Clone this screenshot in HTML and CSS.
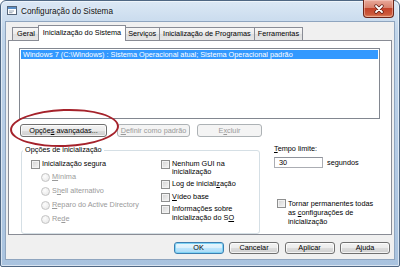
FILE: index.html
```html
<!DOCTYPE html>
<html lang="pt-BR">
<head>
  <meta charset="UTF-8" />
  <title>Configuração do Sistema</title>
  <link rel="stylesheet" href="styles.css">
</head>
<body>
  <div class="window">
    <div class="titlebar">
      <svg class="app-icon" width="10" height="10" viewBox="0 0 10 10">
        <rect x="0.5" y="0.5" width="9" height="8" fill="#fff" stroke="#56667a"/>
        <rect x="1" y="1" width="8" height="2" fill="#5b8fc7"/>
        <rect x="2" y="4.5" width="5" height="1" fill="#9aa7b5"/>
        <rect x="2" y="6.2" width="3.5" height="1" fill="#9aa7b5"/>
      </svg>
      <span class="title">Configuração do Sistema</span>
      <div class="close">
        <svg width="12" height="10" viewBox="0 0 12 10">
          <path d="M3 2 L9 8 M9 2 L3 8" stroke="#5a1b12" stroke-width="3.2" stroke-linecap="round"/>
          <path d="M3 2 L9 8 M9 2 L3 8" stroke="#fff" stroke-width="1.8" stroke-linecap="round"/>
        </svg>
      </div>
    </div>

    <div class="client">
      <div class="tabs">
        <div class="tab">Geral</div>
        <div class="tab active">Inicialização do Sistema</div>
        <div class="tab">Serviços</div>
        <div class="tab">Inicialização de Programas</div>
        <div class="tab">Ferramentas</div>
      </div>

      <div class="panel">
        <div class="listbox">
          <div class="item selected">Windows 7 (C:\Windows) : Sistema Operacional atual; Sistema Operacional padrão</div>
        </div>

        <div class="btn-row">
          <button class="btn btn-adv">Opçõe<u>s</u> avançadas...</button>
          <button class="btn btn-def" disabled><u>D</u>efinir como padrão</button>
          <button class="btn btn-del" disabled>E<u>x</u>cluir</button>
        </div>

        <div class="lower">
          <fieldset class="group">
            <legend>Opções de inicialização</legend>
            <div class="group-cols">
              <div class="col-left">
                <label class="check"><span class="box"></span>Inicialização se<u>g</u>ura</label>
                <label class="radio"><span class="dot"></span><u>M</u>ínima</label>
                <label class="radio"><span class="dot"></span>S<u>h</u>ell alternativo</label>
                <label class="radio"><span class="dot"></span><u>R</u>eparo do Active Directory</label>
                <label class="radio"><span class="dot"></span>Re<u>d</u>e</label>
              </div>
              <div class="col-right">
                <label class="check"><span class="box"></span><span>Nenhum GUI na<br>inicialização</span></label>
                <label class="check"><span class="box"></span><span>Log de iniciali<u>z</u>ação</span></label>
                <label class="check"><span class="box"></span><span><u>V</u>ídeo base</span></label>
                <label class="check"><span class="box"></span><span>Informações sobre<br>inicialização do S<u>O</u></span></label>
              </div>
            </div>
          </fieldset>

          <div class="side">
            <div class="timeout-label"><u>T</u>empo limite:</div>
            <div class="timeout-row">
              <span class="input">30</span>
              <span class="unit">segundos</span>
            </div>
            <label class="check perm"><span class="box"></span><span class="perm-text">Tornar permanentes todas<br>as <u>c</u>onfigurações de<br>inicialização</span></label>
          </div>
        </div>
      </div>

      <div class="footer">
        <button class="btn btn-foot default">OK</button>
        <button class="btn btn-foot">Cancelar</button>
        <button class="btn btn-foot">Aplicar</button>
        <button class="btn btn-foot">Ajuda</button>
      </div>
    </div>

    <div class="ellipse"></div>
  </div>
</body>
</html>
```

FILE: styles.css
```css
:root {
  --frame-border: #4f6783;
  --tab-border: #898c95;
  --client-bg: #f0f0f0;
  --select-bg: #3399ff;
  --btn-border: #707070;
  --disabled-text: #9a9a9a;
  --group-border: #d5dfe5;
}
* { box-sizing: border-box; }
body {
  margin: 0;
  font-family: "Liberation Sans", Arial, sans-serif;
  font-size: 7.3px;
  color: #000;
  background: #fff;
}
u { text-decoration-thickness: 1px; text-underline-offset: 1px; }

.window {
  position: relative;
  width: 400px;
  height: 267px;
  display: flex;
  flex-direction: column;
  padding: 0 5px 7px 5px;
  background: linear-gradient(#dce8f5, #c0d5ea 12%, #b3cae4 60%, #a9c3df);
  border: 1px solid var(--frame-border);
  border-radius: 6px 6px 2px 2px;
  box-shadow: inset 0 0 0 1px rgba(255,255,255,0.55);
}

/* title bar */
.titlebar {
  height: 21px;
  display: flex;
  align-items: center;
}
.app-icon { margin-left: 1px; margin-top: -1px; flex: none; }
.title {
  margin-left: 4px;
  font-size: 8.2px;
  color: #111;
  text-shadow: 0 0 4px rgba(255,255,255,0.9);
}
.close {
  margin-left: auto;
  margin-right: 0;
  align-self: flex-start;
  margin-top: -1px;
  width: 31px;
  height: 18px;
  display: flex;
  align-items: center;
  justify-content: center;
  border: 1px solid #6b2418;
  border-top: none;
  border-radius: 0 0 4px 4px;
  background: linear-gradient(#e9a99a, #d9826d 45%, #c4432a 50%, #cc5a3c 85%, #e08a64);
  box-shadow: inset 0 0 0 1px rgba(255,220,210,0.45);
}

/* client area */
.client {
  flex: 1;
  display: flex;
  flex-direction: column;
  background: var(--client-bg);
  box-shadow: 0 0 0 1px #8fa5bf;
}
.tabs {
  height: 18px;
  display: flex;
  align-items: flex-end;
  padding-left: 6px;
}
.tab {
  height: 13px;
  line-height: 12px;
  padding: 0 3px;
  border: 1px solid var(--tab-border);
  border-bottom: none;
  border-left: none;
  background: linear-gradient(#f7f7f7, #ebebeb 50%, #dedede 50%, #e6e6e6);
  white-space: nowrap;
}
.tab:first-child { border-left: 1px solid var(--tab-border); padding: 0 4px; }
.tab.active {
  position: relative;
  z-index: 1;
  height: 16px;
  line-height: 14px;
  margin: 0 -2px -1px -2px;
  padding: 0 4px;
  border-left: 1px solid var(--tab-border);
  background: #fff;
}
.tab.active + .tab { border-left: none; padding-left: 4px; }

.panel {
  height: 195px;
  margin: 0 2px;
  padding: 7px 11px 0 10px;
  background: #fff;
  border: 1px solid var(--tab-border);
}
.listbox {
  height: 71px;
  padding: 1px;
  border: 1px solid #828790;
  background: #fff;
}
.item {
  height: 9px;
  line-height: 9px;
  padding-left: 2px;
  white-space: nowrap;
  overflow: hidden;
}
.item.selected { background: var(--select-bg); color: #fff; }

/* buttons */
.btn {
  height: 13px;
  padding: 0;
  font: inherit;
  color: #000;
  border: 1px solid var(--btn-border);
  border-radius: 3px;
  background: linear-gradient(#f3f3f3, #ebebeb 50%, #dddddd 50%, #cfcfcf);
  box-shadow: inset 0 0 0 1px rgba(255,255,255,0.75);
}
.btn:disabled {
  color: var(--disabled-text);
  border-color: #adb2b5;
  background: #f4f4f4;
  box-shadow: none;
}
.btn-row { display: flex; margin-top: 5px; padding-left: 1px; }
.btn-adv { width: 87px; }
.btn-def { width: 73px; margin-left: 10px; }
.btn-del { width: 65px; margin-left: 7px; }

/* lower area */
.lower { display: flex; margin-top: 9px; }
.group {
  width: 239px;
  margin: 0 0 0 2px;
  padding: 5px 0 9px 9px;
  border: 1px solid var(--group-border);
  border-radius: 3px;
}
.group legend {
  padding: 0 2px;
  margin-left: -8px;
  line-height: 8.5px;
}
.group-cols { display: flex; }
.col-left {
  width: 130px;
  display: flex;
  flex-direction: column;
  gap: 4.8px;
}
.col-right {
  display: flex;
  flex-direction: column;
  gap: 3.6px;
}
.check, .radio {
  display: flex;
  align-items: flex-start;
  line-height: 8.5px;
  white-space: nowrap;
}
.box {
  flex: none;
  width: 9px;
  height: 9px;
  margin-right: 2px;
  border: 1px solid #8e8f8f;
  background: linear-gradient(135deg, #d2d2d2, #f6f6f6);
  box-shadow: inset 0 0 0 1px #f2f2f2;
}
.radio { margin-left: 10px; color: var(--disabled-text); }
.dot {
  flex: none;
  width: 9px;
  height: 9px;
  margin-right: 2px;
  border: 1px solid #c4c4c4;
  border-radius: 50%;
  background: radial-gradient(circle at 40% 35%, #fdfdfd, #e4e4e4);
}

.side {
  display: flex;
  flex-direction: column;
  margin-left: 14px;
  margin-top: -1px;
}
.timeout-label { line-height: 8.5px; }
.timeout-row {
  display: flex;
  align-items: center;
  margin-top: 3.5px;
}
.input {
  width: 49px;
  height: 11px;
  line-height: 9px;
  padding-left: 4px;
  border: 1px solid #abadb3;
  border-top-color: #8f939b;
  background: #fff;
}
.unit { margin-left: 4px; }
.perm { margin-top: 31px; margin-left: 3px; }
.perm-text { line-height: 9px; }

.footer {
  display: flex;
  justify-content: flex-end;
  gap: 5.5px;
  padding: 7px 4px 0 0;
}
.btn-foot { width: 50px; height: 12px; line-height: 10px; }
.btn-foot.default {
  border-color: #3c7fb1;
  background: linear-gradient(#eaf6fd, #d9f0fc 50%, #bee6fd 50%, #a7d9f5);
  box-shadow: inset 0 0 0 1px #7ed3f5;
}

/* red hand-drawn mark over the advanced options button */
.ellipse {
  position: absolute;
  left: 9px;
  top: 108px;
  width: 109px;
  height: 38px;
  border: 2px solid #a5222b;
  border-radius: 50%;
  transform: rotate(-2deg);
  pointer-events: none;
}
```
